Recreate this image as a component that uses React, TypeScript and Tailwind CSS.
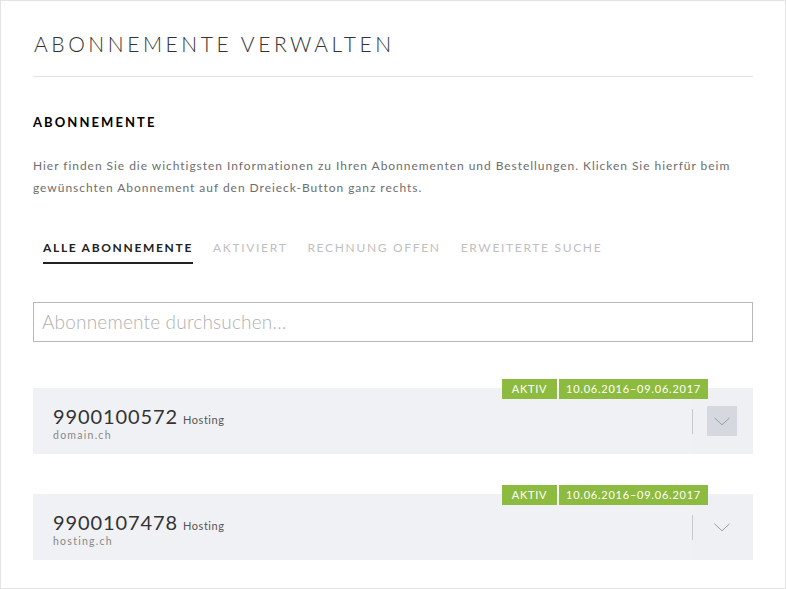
import type { ReactElement } from 'react'

type Subscription = {
  id: string
  product: string
  domain: string
  status: string
  period: string
  expanded?: boolean
}

const subscriptions: Subscription[] = [
  { id: '9900100572', product: 'Hosting', domain: 'domain.ch', status: 'AKTIV', period: '10.06.2016–09.06.2017', expanded: true },
  { id: '9900107478', product: 'Hosting', domain: 'hosting.ch', status: 'AKTIV', period: '10.06.2016–09.06.2017' }
]

const tabs = ['ALLE ABONNEMENTE', 'AKTIVIERT', 'RECHNUNG OFFEN', 'ERWEITERTE SUCHE']

function Chevron(): ReactElement {
  return (
    <svg width="16" height="9" viewBox="0 0 16 9" fill="none" className="text-[#9a9ca6]">
      <path d="M0.5 0.8 L8 7.8 L15.5 0.8" stroke="currentColor" strokeWidth="1" />
    </svg>
  )
}

function SubscriptionRow({ item, first }: { item: Subscription; first: boolean }): ReactElement {
  return (
    <div className={`relative flex h-[66px] items-stretch bg-[#f0f1f4] ${first ? 'mt-[46px]' : 'mt-[40px]'}`}>
      <div className="absolute right-[45px] top-[-9px] flex h-[20px] gap-[2px] text-[11px] tracking-[0.07em] text-white">
        <span className="flex w-[55px] items-center justify-center bg-[#8dbb3f]">{item.status}</span>
        <span className="flex w-[149px] items-center justify-center bg-[#8dbb3f]">{item.period}</span>
      </div>
      <div className="flex flex-1 flex-col justify-center pl-[20px] pt-[4px]">
        <div className="flex items-baseline gap-[5px]">
          <span className="text-[20px] leading-[22px] tracking-[0.045em] text-[#333]">{item.id}</span>
          <span className="text-[11px] tracking-[0.05em] text-[#555]">{item.product}</span>
        </div>
        <span className="text-[10.5px] leading-[12px] tracking-[0.12em] text-[#888]">{item.domain}</span>
      </div>
      <div className="flex w-[61px] items-center bg-[#eff0f3]">
        <div className="h-[25px] w-px bg-[#c8c8c8]" />
        <div
          className={`ml-[14px] flex h-[30px] w-[30px] items-center justify-center ${item.expanded ? 'bg-[#d6d8e0]' : ''}`}
        >
          <Chevron />
        </div>
      </div>
    </div>
  )
}

export default function App(): ReactElement {
  return (
    <div
      className="h-[589px] w-[786px] overflow-hidden border border-[#e4e4e4] bg-white px-[32px] pt-[29px]"
      style={{ fontFamily: 'Lato, "Liberation Sans", sans-serif' }}
    >
      <h1 className="pl-[1px] text-[21px] font-light leading-[28px] tracking-[0.17em] text-[#333]">
        ABONNEMENTE VERWALTEN
      </h1>
      <div className="mt-[18px] h-px bg-[#e2e2e2]" />

      <h2 className="mt-[37px] text-[13px] font-bold leading-[16px] tracking-[0.16em] text-black">ABONNEMENTE</h2>
      <p className="mt-[25px] text-[12px] leading-[22px] tracking-[0.08em] text-[#6e6e6e]">
        Hier finden Sie die wichtigsten Informationen zu Ihren Abonnementen und Bestellungen. Klicken Sie hierfür beim
        <br />
        gewünschten Abonnement auf den Dreieck-Button ganz rechts.
      </p>

      <nav className="mt-[41px] flex gap-[20px] pl-[10px]">
        {tabs.map((tab, index) => (
          <span
            key={tab}
            className={`pb-[6px] text-[12px] leading-[16px] tracking-[0.14em] ${
              index === 0 ? 'border-b-2 border-[#222] font-bold text-[#222]' : 'text-[#c0c0c0]'
            }`}
          >
            {tab}
          </span>
        ))}
      </nav>

      <div className="mt-[38px] flex h-[40px] items-center border border-[#b8b8b8] px-[8px]">
        <span className="text-[19px] font-light tracking-[0.01em] text-[#b0b0b0]">Abonnemente durchsuchen...</span>
      </div>

      {subscriptions.map((item, index) => (
        <SubscriptionRow key={item.id} item={item} first={index === 0} />
      ))}
    </div>
  )
}
